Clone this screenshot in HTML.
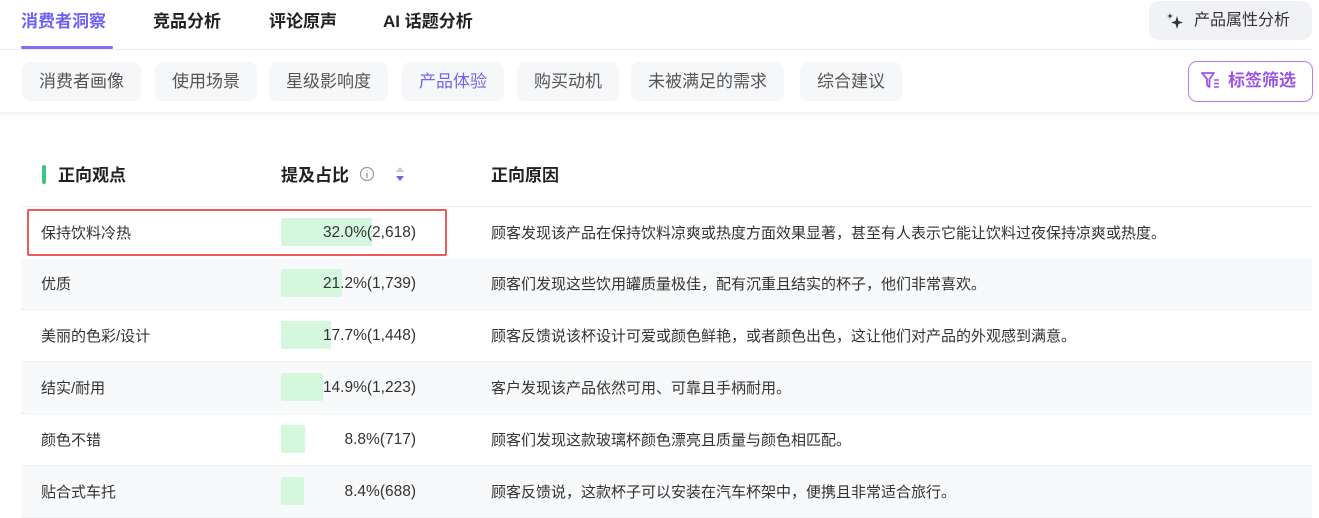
<!DOCTYPE html>
<html><head><meta charset="utf-8"><style>
*{margin:0;padding:0;box-sizing:border-box}
body{width:1319px;height:514px;overflow:hidden;background:#fff;font-family:"Liberation Sans","Noto Sans CJK SC",sans-serif;color:#222;position:relative}
.t{position:absolute;font-size:17px;font-weight:bold;color:#222;top:7px}
.sub{position:absolute;top:62px;height:39px;line-height:39px;background:#f6f7f9;border-radius:8px;font-size:17px;color:#555;padding:0 17px}
.band{position:absolute;left:0;top:112px;width:1319px;height:6px;background:linear-gradient(#f1f2f4,#fff)}
.row{position:absolute;left:21px;width:1291px;height:52px;font-size:15px;border-bottom:1px solid #eef0f2}
.row.g{background:#f8f9fa}
.row .n{position:absolute;left:20px;top:15px;color:#333}
.row .bar{position:absolute;left:260px;top:11px;height:28px;background:#d4f7de;border-radius:2px}
.row .p{position:absolute;right:896px;top:17px;color:#333;font-size:15.5px}
.row .r{position:absolute;left:470px;top:15px;color:#333}
</style></head><body>
<div class="t" style="left:21px;color:#6e62f5">消费者洞察</div>
<div style="position:absolute;left:21px;top:46px;width:92px;height:3px;background:#7b6ef7;border-radius:2px"></div>
<div class="t" style="left:153px">竞品分析</div>
<div class="t" style="left:269px">评论原声</div>
<div class="t" style="left:383px">AI 话题分析</div>
<div style="position:absolute;left:0;top:49px;width:1312px;height:1px;background:#eceef1"></div>
<div style="position:absolute;left:1149px;top:1px;width:163px;height:39px;background:#f1f2f5;border-radius:10px;font-size:16px;line-height:39px;color:#333;padding-left:45px">产品属性分析</div>
<svg style="position:absolute;left:1165px;top:11px" width="20" height="20" viewBox="0 0 20 20"><path d="M12 5 L13.5 10 L18 11.5 L13.5 13 L12 18 L10.5 13 L6 11.5 L10.5 10Z" fill="#333"/><path d="M5 2 L5.8 4.2 L8 5 L5.8 5.8 L5 8 L4.2 5.8 L2 5 L4.2 4.2Z" fill="#333"/></svg>
<div class="sub" style="left:22px">消费者画像</div>
<div class="sub" style="left:155px">使用场景</div>
<div class="sub" style="left:269px">星级影响度</div>
<div class="sub" style="left:402px;color:#7165f0">产品体验</div>
<div class="sub" style="left:517px">购买动机</div>
<div class="sub" style="left:631px">未被满足的需求</div>
<div class="sub" style="left:800px">综合建议</div>
<div style="position:absolute;left:1188px;top:61px;width:125px;height:41px;border:1.5px solid #b77cf0;border-radius:9px;color:#9b55e6;font-size:17px;font-weight:bold;line-height:38px;padding-left:39px">标签筛选</div>
<svg style="position:absolute;left:1200px;top:71px" width="22" height="20" viewBox="0 0 22 20"><path d="M2 2 H14 L9.5 8 V16 L7 14 V8 Z" fill="none" stroke="#9b55e6" stroke-width="1.8" stroke-linejoin="round"/><path d="M14 9 H19 M14 12.5 H19 M14 16 H19" stroke="#9b55e6" stroke-width="1.6"/></svg>
<div class="band"></div>
<div style="position:absolute;left:42px;top:165px;width:4px;height:19px;background:#3ec484;border-radius:2px"></div>
<div style="position:absolute;left:58px;top:161px;font-size:17px;font-weight:bold">正向观点</div>
<div style="position:absolute;left:281px;top:161px;font-size:17px;font-weight:bold">提及占比</div>
<svg style="position:absolute;left:359px;top:166px" width="16" height="16" viewBox="0 0 16 16"><circle cx="8" cy="8" r="6.5" fill="none" stroke="#999" stroke-width="1.2"/><path d="M8 7v4.5M8 4.5v1" stroke="#999" stroke-width="1.4"/></svg>
<svg style="position:absolute;left:394px;top:165px" width="12" height="18" viewBox="0 0 12 18"><path d="M6 2 L10 7 H2Z" fill="#c5c8d0"/><path d="M6 16 L10 11 H2Z" fill="#6e62f5"/></svg>
<div style="position:absolute;left:491px;top:161px;font-size:17px;font-weight:bold">正向原因</div>
<div style="position:absolute;left:21px;top:206px;width:1291px;height:1px;background:#eceef1"></div>
<div class="row" style="top:207px"><span class="n">保持饮料冷热</span><div class="bar" style="width:91px"></div><span class="p">32.0%(2,618)</span><span class="r">顾客发现该产品在保持饮料凉爽或热度方面效果显著，甚至有人表示它能让饮料过夜保持凉爽或热度。</span></div>
<div class="row g" style="top:258px"><span class="n">优质</span><div class="bar" style="width:61px"></div><span class="p">21.2%(1,739)</span><span class="r">顾客们发现这些饮用罐质量极佳，配有沉重且结实的杯子，他们非常喜欢。</span></div>
<div class="row" style="top:310px"><span class="n">美丽的色彩/设计</span><div class="bar" style="width:50px"></div><span class="p">17.7%(1,448)</span><span class="r">顾客反馈说该杯设计可爱或颜色鲜艳，或者颜色出色，这让他们对产品的外观感到满意。</span></div>
<div class="row g" style="top:362px"><span class="n">结实/耐用</span><div class="bar" style="width:42px"></div><span class="p">14.9%(1,223)</span><span class="r">客户发现该产品依然可用、可靠且手柄耐用。</span></div>
<div class="row" style="top:414px"><span class="n">颜色不错</span><div class="bar" style="width:24px"></div><span class="p">8.8%(717)</span><span class="r">顾客们发现这款玻璃杯颜色漂亮且质量与颜色相匹配。</span></div>
<div class="row g" style="top:466px"><span class="n">贴合式车托</span><div class="bar" style="width:23px"></div><span class="p">8.4%(688)</span><span class="r">顾客反馈说，这款杯子可以安装在汽车杯架中，便携且非常适合旅行。</span></div>
<div style="position:absolute;left:27px;top:209px;width:420px;height:47px;border:2px solid #ee5a5a;border-radius:2px"></div>
</body></html>
